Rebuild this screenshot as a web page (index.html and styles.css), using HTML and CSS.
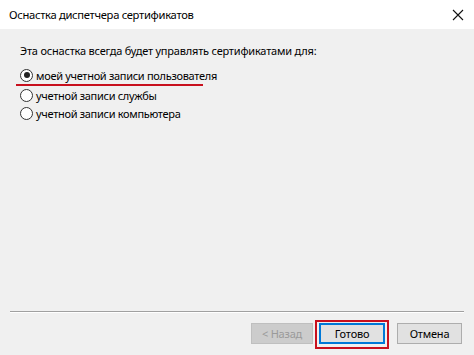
FILE: index.html
```html
<!DOCTYPE html>
<html lang="ru">
<head>
    <meta charset="UTF-8">
    <title>Оснастка диспетчера сертификатов</title>
    <link rel="stylesheet" href="styles.css">
</head>
<body>
    <div class="window">
        <div class="titlebar">
            <span class="title">Оснастка диспетчера сертификатов</span>
            <svg class="close" width="12" height="12" viewBox="0 0 12 12">
                <path d="M1 1 L11 11 M11 1 L1 11" stroke="#111" stroke-width="1.1" fill="none"/>
            </svg>
        </div>

        <div class="content">
            <p class="intro">Эта оснастка всегда будет управлять сертификатами для:</p>
            <div class="options">
                <label class="option checked">
                    <span class="radio"></span>моей учетной записи пользователя
                </label>
                <div class="underline"></div>
                <label class="option">
                    <span class="radio"></span>учетной записи службы
                </label>
                <label class="option">
                    <span class="radio"></span>учетной записи компьютера
                </label>
            </div>
        </div>

        <div class="footer">
            <div class="separator"></div>
            <div class="buttons">
                <button type="button" class="btn disabled">&lt; Назад</button>
                <span class="highlight">
                    <button type="button" class="btn default">Готово</button>
                </span>
                <button type="button" class="btn">Отмена</button>
            </div>
        </div>
    </div>
</body>
</html>
```

FILE: styles.css
```css
body {
    margin: 0;
    font-family: "Noto Sans", "Open Sans", sans-serif;
    font-size: 11px;
    color: #000;
}

.window {
    width: 474px;
    height: 355px;
    background-color: #f0f0f0;
    display: flex;
    flex-direction: column;
}

.titlebar {
    height: 29px;
    background-color: #ffffff;
    display: flex;
    align-items: center;
    justify-content: space-between;
    padding: 0 10px 0 9px;
}

.title {
    font-size: 11.2px;
    letter-spacing: -0.3px;
}

.content {
    flex: 1;
    padding: 14px 20px 0 20px;
}

.intro {
    margin: 0 0 7px 0;
    line-height: 16px;
    letter-spacing: -0.2px;
}

.options {
    display: flex;
    flex-direction: column;
    align-items: flex-start;
}

.option {
    display: flex;
    align-items: center;
    height: 18px;
    letter-spacing: -0.3px;
}

.radio {
    width: 11px;
    height: 11px;
    border: 1px solid #333;
    border-radius: 50%;
    background-color: #fff;
    margin-right: 3px;
    position: relative;
}

.option.checked .radio::after {
    content: "";
    position: absolute;
    left: 2.5px;
    top: 2.5px;
    width: 6px;
    height: 6px;
    border-radius: 50%;
    background-color: #222;
}

.underline {
    width: 187px;
    height: 2px;
    margin: 0 0 0 -4px;
    background-color: #c8101e;
}

.footer {
    padding: 0 10px 6px 10px;
}

.separator {
    height: 1px;
    background-color: #a0a0a0;
    border-bottom: 1px solid #fff;
    margin-bottom: 7px;
}

.buttons {
    display: flex;
    justify-content: flex-end;
    align-items: flex-start;
    padding-right: 2px;
}

.btn {
    font-family: "Noto Sans", "Open Sans", sans-serif;
    font-size: 11px;
    width: 65px;
    height: 21px;
    padding: 0;
    margin-top: 3px;
    background-color: #e1e1e1;
    border: 1px solid #adadad;
    color: #000;
    letter-spacing: -0.2px;
}

.btn.disabled {
    background-color: #cccccc;
    border-color: #bfbfbf;
    color: #9a9a9a;
    width: 62px;
}

.btn.default {
    border: 2px solid #0078d7;
    width: 66px;
    margin-top: 0;
}

.highlight {
    border: 2px solid #c8101e;
    padding: 1px 2px 3px 2px;
    margin: 0 8px 0 2px;
    display: flex;
}
```
